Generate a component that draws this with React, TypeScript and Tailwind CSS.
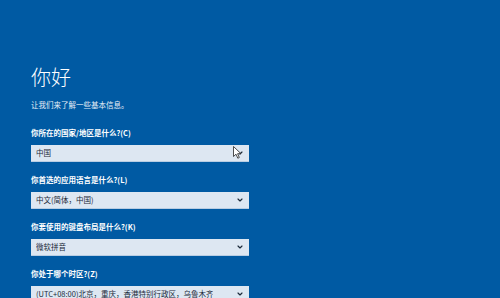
import { ChevronDown } from 'lucide-react';

const fields = [
  { label: '你所在的国家/地区是什么?(C)', value: '中国', cursor: true },
  { label: '你首选的应用语言是什么?(L)', value: '中文(简体，中国)' },
  { label: '你要使用的键盘布局是什么?(K)', value: '微软拼音' },
  { label: '你处于哪个时区?(Z)', value: '(UTC+08:00)北京，重庆，香港特别行政区，乌鲁木齐' },
];

function Cursor() {
  return (
    <svg width="9" height="13" viewBox="0 0 9 13" className="absolute left-[202px] top-[1px]">
      <path d="M0.5 0.5 L0.5 10.5 L3 8.2 L4.8 12.2 L6.3 11.5 L4.6 7.7 L8 7.7 Z" fill="#fff" stroke="#222" strokeWidth="0.8" />
    </svg>
  );
}

export default function App() {
  return (
    <div
      className="w-[500px] h-[298px] overflow-hidden bg-[#005aa3] text-white"
      style={{ fontFamily: '"Noto Sans CJK SC", "Noto Sans", sans-serif' }}
    >
      <div className="pl-[31px] pt-[64px]">
        <h1 className="text-[20px] leading-[26px] font-light">你好</h1>
        <p className="mt-[10px] text-[7.5px] leading-[10px] text-[#e6eef7]">让我们来了解一些基本信息。</p>
        <div className="mt-[18px] flex flex-col gap-[13px]">
          {fields.map((f) => (
            <div key={f.label} className="flex flex-col gap-[7px]">
              <div className="text-[7.5px] leading-[10px] font-bold">{f.label}</div>
              <div className="relative w-[218px] h-[17px] bg-[#dde7f2] border-b border-[#b8cde3] flex items-center justify-between pl-[5px] pr-[5px] text-[#1b2a3a]">
                <span className="text-[7.5px] leading-[10px] whitespace-nowrap overflow-hidden">{f.value}</span>
                <ChevronDown className="w-[8px] h-[8px] shrink-0" strokeWidth={3.5} color="#1b2a3a" />
                {f.cursor && <Cursor />}
              </div>
            </div>
          ))}
        </div>
      </div>
    </div>
  );
}
